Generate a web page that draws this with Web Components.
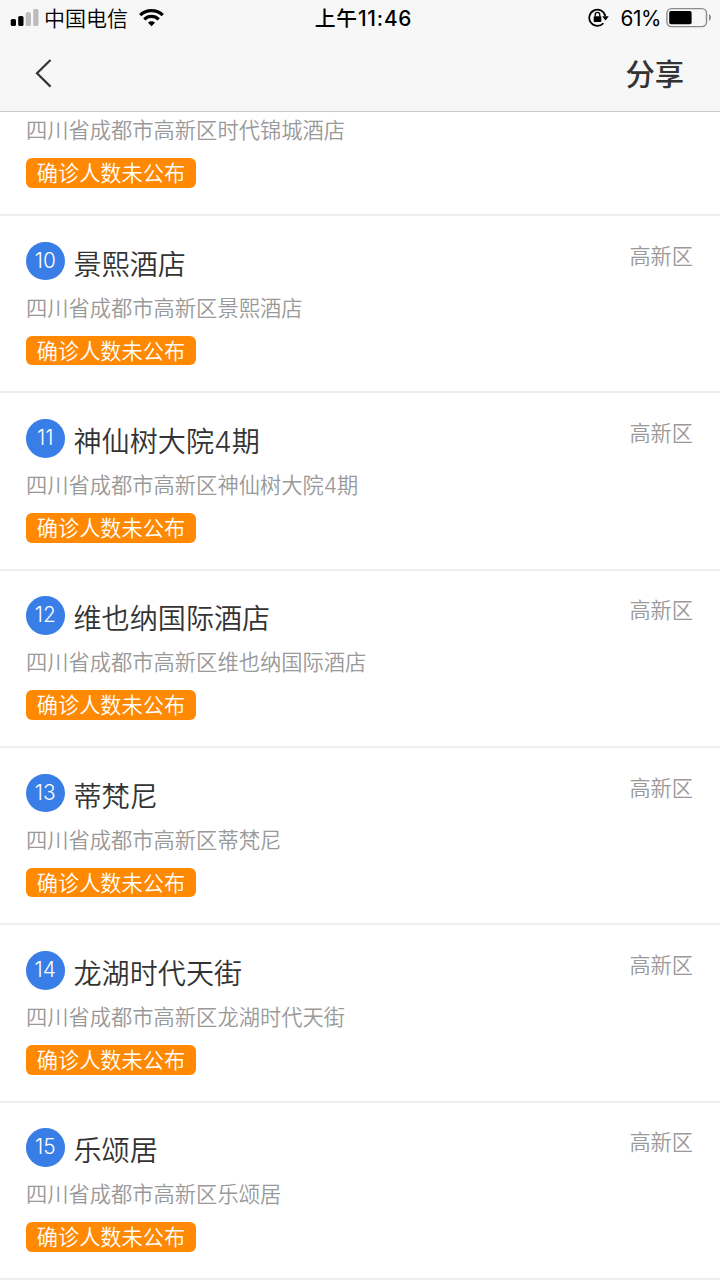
<!DOCTYPE html>
<html lang="zh-CN">
<head>
<meta charset="utf-8">
<title>小区列表</title>
<style>
    body {
        margin: 0;
        width: 720px;
        height: 1280px;
        overflow: hidden;
        background: #fff;
        font-family: Inter, "Noto Sans CJK SC", sans-serif;
    }
</style>
</head>
<body>
<app-screen>
    <status-bar slot="top" carrier="中国电信" time="上午11:46" battery="61%"></status-bar>
    <nav-bar slot="top">分享</nav-bar>
    <place-item address="四川省成都市高新区时代锦城酒店"></place-item>
    <place-item number="10" name="景熙酒店" district="高新区" address="四川省成都市高新区景熙酒店"></place-item>
    <place-item number="11" name="神仙树大院4期" district="高新区" address="四川省成都市高新区神仙树大院4期"></place-item>
    <place-item number="12" name="维也纳国际酒店" district="高新区" address="四川省成都市高新区维也纳国际酒店"></place-item>
    <place-item number="13" name="蒂梵尼" district="高新区" address="四川省成都市高新区蒂梵尼"></place-item>
    <place-item number="14" name="龙湖时代天街" district="高新区" address="四川省成都市高新区龙湖时代天街"></place-item>
    <place-item number="15" name="乐颂居" district="高新区" address="四川省成都市高新区乐颂居"></place-item>
</app-screen>

<script>
class AppScreen extends HTMLElement {
    constructor() {
        super();
        this.attachShadow({ mode: "open" });
    }

    connectedCallback() {
        this.shadowRoot.innerHTML = `
            <style>
                :host {
                    display: flex;
                    flex-direction: column;
                    height: 1280px;
                }

                header {
                    flex: none;
                    height: 111px;
                    background: #f7f7f7;
                    border-bottom: 1px solid #c8c9ca;
                }

                main {
                    flex: 1;
                    min-height: 0;
                    overflow: hidden;
                }
            </style>
            <header><slot name="top"></slot></header>
            <main><slot></slot></main>
        `;
    }
}

class StatusBar extends HTMLElement {
    constructor() {
        super();
        this.attachShadow({ mode: "open" });
    }

    connectedCallback() {
        this.shadowRoot.innerHTML = `
            <style>
                :host {
                    display: grid;
                    grid-template-columns: 1fr auto 1fr;
                    align-items: center;
                    box-sizing: border-box;
                    height: 36px;
                    padding: 0 8px 0 10px;
                    color: #000;
                    font-size: 20.8px;
                    line-height: 34px;
                }

                div {
                    display: flex;
                    align-items: center;
                }

                svg {
                    display: block;
                    flex: none;
                }

                span, .time {
                    padding-top: 2px;
                }

                .carrier {
                    margin-left: 5px;
                    font-size: 21px;
                    font-weight: 350;
                }

                .wifi {
                    margin-left: 11px;
                }

                .time {
                    font-weight: 500;
                    letter-spacing: 0.8px;
                    margin-left: 5px;
                }

                .right {
                    justify-content: flex-end;
                }

                .battery {
                    margin: 0 5px 0 10px;
                    letter-spacing: -0.4px;
                }
            </style>
            <div>
                <svg width="29" height="36" viewBox="0 0 29 36">
                    <rect x="0.7" y="19" width="5.3" height="7" rx="1.6"/>
                    <rect x="8.2" y="16" width="5.3" height="10" rx="1.6"/>
                    <rect x="15.7" y="12.3" width="5.3" height="13.7" rx="1.6" fill="#bbb"/>
                    <rect x="23.2" y="9" width="5.3" height="17" rx="1.6" fill="#bbb"/>
                </svg>
                <span class="carrier">${this.getAttribute("carrier")}</span>
                <svg class="wifi" width="26" height="36" viewBox="0 0 26 36" fill="none" stroke="#000" stroke-width="3.2">
                    <path d="M1.2 15.2a16.2 16.2 0 0 1 22.6 0"/>
                    <path d="M5.3 19.3a10.4 10.4 0 0 1 14.4 0"/>
                    <path d="M12.5 26.2l-3.5-3.5a5 5 0 0 1 7 0z" fill="#000" stroke="none"/>
                </svg>
            </div>
            <div class="time">${this.getAttribute("time")}</div>
            <div class="right">
                <svg width="22" height="36" viewBox="0 0 22 36">
                    <path d="M15.4 23.2A8.1 8.1 0 1 1 17.3 16.2" fill="none" stroke="#000" stroke-width="1.7"/>
                    <path d="M14.2 16.2h6.6l-3.3 4.4z"/>
                    <rect x="5.7" y="16.2" width="7.6" height="5.8" rx="0.7"/>
                    <path d="M7.2 16.5v-1.8a2.3 2.3 0 0 1 4.6 0v1.8" fill="none" stroke="#000" stroke-width="1.3"/>
                </svg>
                <span class="battery">${this.getAttribute("battery")}</span>
                <svg width="46" height="36" viewBox="0 0 46 36">
                    <rect x="0.9" y="8.6" width="39.6" height="18" rx="4.5" fill="none" stroke="#8c8c8c" stroke-width="1.4"/>
                    <rect x="3.2" y="11" width="22.4" height="13.2" rx="1.8"/>
                    <path d="M43 14.3c2.6.8 2.6 5.7 0 6.6z" fill="#8c8c8c"/>
                </svg>
            </div>
        `;
    }
}

class NavBar extends HTMLElement {
    constructor() {
        super();
        this.attachShadow({ mode: "open" });
    }

    connectedCallback() {
        this.shadowRoot.innerHTML = `
            <style>
                :host {
                    display: flex;
                    justify-content: space-between;
                    align-items: center;
                    box-sizing: border-box;
                    height: 75px;
                    padding: 0 36px 0 34px;
                    color: #333;
                    font-size: 29.3px;
                    font-weight: 500;
                    line-height: 75px;
                }

                span {
                    padding-top: 2px;
                }
            </style>
            <svg width="20" height="30" viewBox="0 0 20 30" fill="none" stroke="#333" stroke-width="2.2">
                <path d="M16.5 1L3 14.3l13.5 13.3"/>
            </svg>
            <span><slot></slot></span>
        `;
    }
}

class PlaceItem extends HTMLElement {
    constructor() {
        super();
        this.attachShadow({ mode: "open" });
    }

    connectedCallback() {
        const number = this.getAttribute("number");

        // el primero está cortado por el scroll: sin cabecera
        const head = number ? `
            <div class="head">
                <span class="number">${number}</span>
                <span class="name">${this.getAttribute("name")}</span>
                <span class="district">${this.getAttribute("district")}</span>
            </div>` : "";

        this.shadowRoot.innerHTML = `
            <style>
                :host {
                    display: flex;
                    flex-direction: column;
                    align-items: flex-start;
                    box-sizing: border-box;
                    height: 177.33px;
                    padding: 25.7px 27px 0 26px;
                    border-bottom: 2px solid #eee;
                }

                :host(:not([number])) {
                    height: 104px;
                    padding-top: 4.4px;
                }

                .head {
                    display: flex;
                    align-self: stretch;
                    height: 52px;
                }

                .number {
                    width: 38.5px;
                    height: 38.5px;
                    border-radius: 50%;
                    background: #387ee6;
                    color: #fff;
                    font-size: 20.8px;
                    font-weight: 350;
                    line-height: 38px;
                    text-align: center;
                }

                .name {
                    flex: 1;
                    margin-left: 9px;
                    color: #333;
                    font-size: 28.1px;
                    font-weight: 350;
                    line-height: 46px;
                }

                .district {
                    color: #999;
                    font-size: 21.2px;
                    font-weight: 350;
                    line-height: 28px;
                }

                .address {
                    height: 28px;
                    color: #999;
                    font-size: 21.27px;
                    font-weight: 350;
                    line-height: 28px;
                    white-space: nowrap;
                }

                .badge {
                    height: 29.5px;
                    margin-top: 14px;
                    padding: 0 10.8px;
                    border-radius: 6px;
                    background: #ff8903;
                    color: #fff;
                    font-size: 21.2px;
                    font-weight: 350;
                    line-height: 31.5px;
                }
            </style>
            ${head}
            <div class="address">${this.getAttribute("address")}</div>
            <div class="badge">确诊人数未公布</div>
        `;
    }
}

customElements.define("app-screen", AppScreen);
customElements.define("status-bar", StatusBar);
customElements.define("nav-bar", NavBar);
customElements.define("place-item", PlaceItem);
</script>
</body>
</html>
